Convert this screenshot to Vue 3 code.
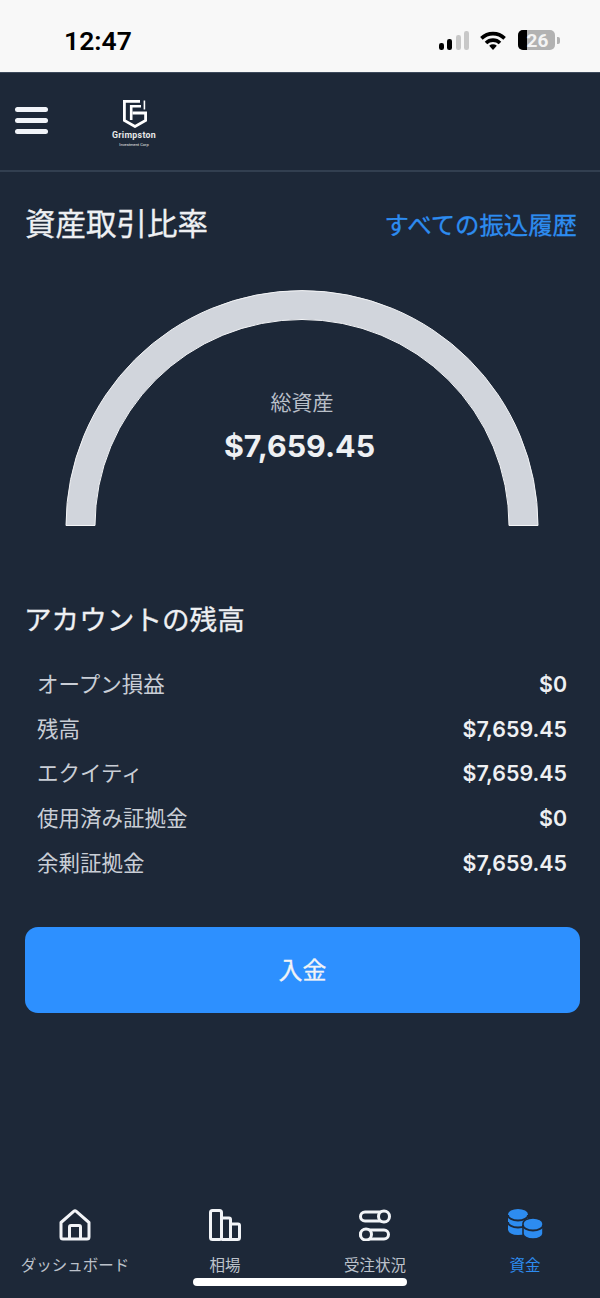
<script setup>
const rows = [
  { label: 'オープン損益', value: '$0' },
  { label: '残高', value: '$7,659.45' },
  { label: 'エクイティ', value: '$7,659.45' },
  { label: '使用済み証拠金', value: '$0' },
  { label: '余剰証拠金', value: '$7,659.45' },
]
</script>

<template>
  <div class="page">
    <div class="status">
      <span class="time">12:47</span>
      <div class="status-icons">
        <svg width="30" height="19" viewBox="0 0 30 19">
          <rect x="0" y="12" width="5" height="7" rx="2.2" fill="#000" />
          <rect x="8" y="8" width="5" height="11" rx="2.2" fill="#000" />
          <rect x="17" y="4" width="5" height="15" rx="2.2" fill="#c8c8c8" />
          <rect x="25" y="0" width="5" height="19" rx="2.2" fill="#c8c8c8" />
        </svg>
        <svg class="wifi" width="26" height="19" viewBox="0 0 26 19">
          <path d="M1.4 7.4 A16.5 16.5 0 0 1 24.6 7.4" fill="none" stroke="#000" stroke-width="3.6" />
          <path d="M6 12 A10 10 0 0 1 20 12" fill="none" stroke="#000" stroke-width="3.6" />
          <path d="M9.2 14.8 A5.6 5.6 0 0 1 16.8 14.8 L13 19 Z" fill="#000" />
        </svg>
        <div class="battery">
          <div class="battery-body"><div class="battery-fill"></div><span class="battery-num">26</span></div>
          <div class="battery-cap"></div>
        </div>
      </div>
    </div>

    <header class="topbar">
      <div class="burger"><i></i><i></i><i></i></div>
      <div class="logo">
        <svg width="24" height="28" viewBox="0 0 24 28" fill="none" stroke="#fff">
          <path d="M17 1.4 H1.4 V20.5 L12 26.5 L22.6 20.5 V13 H9.5" stroke-width="2.8" />
          <path d="M8.2 20 V6.2 H18" stroke-width="2.6" />
          <path d="M21.4 0.5 V9.5" stroke-width="1.6" />
        </svg>
        <div class="logo-name">Grimpston</div>
        <div class="logo-sub">Investment Corp</div>
      </div>
    </header>

    <main class="content">
      <div class="title-row">
        <h1 class="title">資産取引比率</h1>
        <a class="link">すべての振込履歴</a>
      </div>

      <div class="gauge">
        <svg width="474" height="236" viewBox="0 0 474 236">
          <path d="M1 235.5 A236 235 0 0 1 473 235.5 L444 235.5 A207 206 0 0 0 30 235.5 Z" fill="#d1d5dc" stroke="#f4f5f7" stroke-width="1" stroke-linejoin="miter" />
        </svg>
        <div class="gauge-text">
          <div class="gauge-label">総資産</div>
          <div class="gauge-value">$7,659.45</div>
        </div>
      </div>

      <h2 class="section">アカウントの残高</h2>
      <ul class="rows">
        <li v-for="row in rows" :key="row.label" class="row">
          <span class="row-label">{{ row.label }}</span>
          <span class="row-value">{{ row.value }}</span>
        </li>
      </ul>

      <button class="deposit">入金</button>
    </main>

    <nav class="tabs">
      <div class="tab">
        <svg width="32" height="32" viewBox="0 0 32 32" fill="none" stroke="#f2f4f7" stroke-width="3" stroke-linejoin="round">
          <path d="M2 13.5 L14.7 2.3 a2 2 0 0 1 2.6 0 L30 13.5 V28 a2 2 0 0 1 -2 2 H4 a2 2 0 0 1 -2 -2 Z" />
          <path d="M10.5 30 V18 a1.5 1.5 0 0 1 1.5 -1.5 H20 a1.5 1.5 0 0 1 1.5 1.5 V30" />
        </svg>
        <span>ダッシュボード</span>
      </div>
      <div class="tab">
        <svg width="32" height="32" viewBox="0 0 32 32" fill="none" stroke="#f2f4f7" stroke-width="3" stroke-linejoin="round">
          <rect x="1.5" y="1.5" width="11" height="29" rx="2" />
          <path d="M12.5 9 H20 a1.5 1.5 0 0 1 1.5 1.5 V30.5" />
          <path d="M21.5 15 H29 a1.5 1.5 0 0 1 1.5 1.5 V28.5 a2 2 0 0 1 -2 2 H12.5" />
        </svg>
        <span>相場</span>
      </div>
      <div class="tab">
        <svg width="32" height="32" viewBox="0 0 32 32" fill="none" stroke="#f2f4f7" stroke-width="3">
          <rect x="1.5" y="3" width="28" height="9" rx="4.5" />
          <circle cx="25" cy="7.5" r="5.5" fill="#1d2838" />
          <rect x="1.5" y="21" width="28" height="9" rx="4.5" />
          <circle cx="7" cy="25.5" r="5.5" fill="#1d2838" />
        </svg>
        <span>受注状況</span>
      </div>
      <div class="tab active">
        <svg width="35" height="32" viewBox="0 0 35 32">
          <rect x="0" y="0" width="20" height="26" rx="10" ry="5.5" fill="#2d8cf0" />
          <path d="M0 6 a10 5.5 0 0 0 20 0 M0 13 a10 5.5 0 0 0 20 0" fill="none" stroke="#1d2838" stroke-width="1.8" />
          <rect x="15" y="9" width="20" height="21" rx="10" ry="5.5" fill="#2d8cf0" stroke="#1d2838" stroke-width="1.6" />
          <path d="M15 16 a10 5.5 0 0 0 20 0" fill="none" stroke="#1d2838" stroke-width="1.8" />
        </svg>
        <span>資金</span>
      </div>
      <div class="home-bar"></div>
    </nav>
  </div>
</template>

<style>
html, body { margin: 0; background: #1d2838; }
</style>

<style scoped>
.page {
  position: relative;
  width: 600px;
  height: 1298px;
  display: flex;
  flex-direction: column;
  overflow: hidden;
  background: #1d2838;
  font-family: Inter, "Noto Sans CJK JP", sans-serif;
  color: #e5e7eb;
}
.status {
  height: 73px;
  box-sizing: border-box;
  background: #f8f8f8;
  display: flex;
  align-items: center;
  justify-content: space-between;
  padding: 0 40px 0 64px;
  border-bottom: 1px solid #3d4a5c;
}
.time {
  font-size: 26.5px;
  font-weight: 600;
  color: #000;
  margin-top: 8px;
  font-family: Roboto, sans-serif;
}
.status-icons {
  display: flex;
  align-items: flex-end;
  margin-top: 8px;
}
.wifi { margin-left: 11px; }
.battery {
  display: flex;
  align-items: center;
  margin-left: 12px;
}
.battery-body {
  position: relative;
  width: 37px;
  height: 20px;
  border-radius: 5px;
  background: #b2b2b2;
  overflow: hidden;
  display: flex;
  align-items: center;
  justify-content: center;
}
.battery-fill {
  position: absolute;
  left: 0;
  top: 0;
  bottom: 0;
  width: 9px;
  background: #000;
}
.battery-num {
  position: relative;
  left: 1px;
  color: #f4f4f4;
  font-size: 19px;
  font-weight: 700;
  font-family: Roboto, sans-serif;
}
.battery-cap {
  width: 3px;
  height: 7px;
  margin-left: 2px;
  border-radius: 0 2px 2px 0;
  background: #b2b2b2;
}
.topbar {
  height: 99px;
  box-sizing: border-box;
  display: flex;
  align-items: flex-start;
  border-bottom: 2px solid #323f50;
  padding-left: 15px;
}
.burger {
  width: 33px;
  margin-top: 34px;
  display: flex;
  flex-direction: column;
  gap: 6px;
}
.burger i {
  display: block;
  height: 5px;
  border-radius: 3px;
  background: #f1f4f9;
}
.logo {
  margin-left: 63px;
  margin-top: 27px;
  width: 46px;
  display: flex;
  flex-direction: column;
  align-items: center;
}
.logo svg { display: block; margin-left: 1px; }
.logo-name {
  font-family: Roboto, sans-serif;
  font-size: 8.8px;
  line-height: 11px;
  margin-top: 2px;
  font-weight: 700;
  letter-spacing: 0.3px;
  color: #e8e8e8;
}
.logo-sub {
  font-family: Roboto, sans-serif;
  font-size: 4px;
  line-height: 5px;
  margin-top: 1px;
  color: #e8e8e8;
  white-space: nowrap;
}
.content {
  flex: 1;
  padding: 0 20px 0 25px;
}
.title-row {
  display: flex;
  justify-content: space-between;
  align-items: center;
  height: 44px;
  margin-top: 30px;
  padding-right: 3px;
}
.title {
  margin: 0;
  font-size: 30.5px;
  line-height: 44px;
  font-weight: 400;
  color: #eef0f3;
  -webkit-text-stroke: 0.3px #eef0f3;
}
.link {
  padding-top: 2px;
  font-size: 24.4px;
  line-height: 44px;
  font-weight: 400;
  color: #2d8cf0;
  -webkit-text-stroke: 0.3px #2d8cf0;
}
.gauge {
  position: relative;
  width: 474px;
  margin: 44px 0 0 40px;
  height: 236px;
}
.gauge svg { display: block; }
.gauge-text {
  position: absolute;
  left: 0;
  right: 0;
  top: 96px;
  text-align: center;
}
.gauge-label {
  font-size: 21px;
  line-height: 34px;
  color: #b9bfc8;
}
.gauge-value {
  margin-top: 4px;
  padding-right: 5px;
  font-size: 30.4px;
  line-height: 44px;
  font-weight: 700;
  color: #eef0f3;
}
.section {
  margin: 73px 0 0 -1px;
  font-size: 27.6px;
  line-height: 42px;
  font-weight: 400;
  color: #eef0f3;
  -webkit-text-stroke: 0.3px #eef0f3;
}
.rows {
  list-style: none;
  margin: 21px 0 0;
  padding: 0 13px 0 12px;
}
.row {
  display: flex;
  justify-content: space-between;
  align-items: center;
  height: 44.6px;
}
.row-label {
  font-size: 21.5px;
  padding-bottom: 3px;
  color: #c9ced6;
}
.row-value {
  font-size: 21.4px;
  font-weight: 600;
  color: #eef0f3;
}
.deposit {
  display: block;
  width: 555px;
  height: 86px;
  margin-top: 42px;
  padding: 0 0 2px;
  border: 0;
  border-radius: 13px;
  background: #2d90ff;
  color: #f1f3f6;
  font-family: inherit;
  font-size: 24px;
  font-weight: 400;
  -webkit-text-stroke: 0.3px #f1f3f6;
}
.tabs {
  position: relative;
  height: 118px;
  box-sizing: border-box;
  display: flex;
  padding: 29px 0 0 0;
}
.tab {
  width: 150px;
  display: flex;
  flex-direction: column;
  align-items: center;
  font-size: 15.5px;
  line-height: 22px;
  color: #bcc2cb;
}
.tab svg { margin-bottom: 14px; }
.tab.active { color: #2d8cf0; }
.home-bar {
  position: absolute;
  left: 193px;
  top: 98px;
  width: 214px;
  height: 8px;
  border-radius: 4px;
  background: #fff;
}
</style>
